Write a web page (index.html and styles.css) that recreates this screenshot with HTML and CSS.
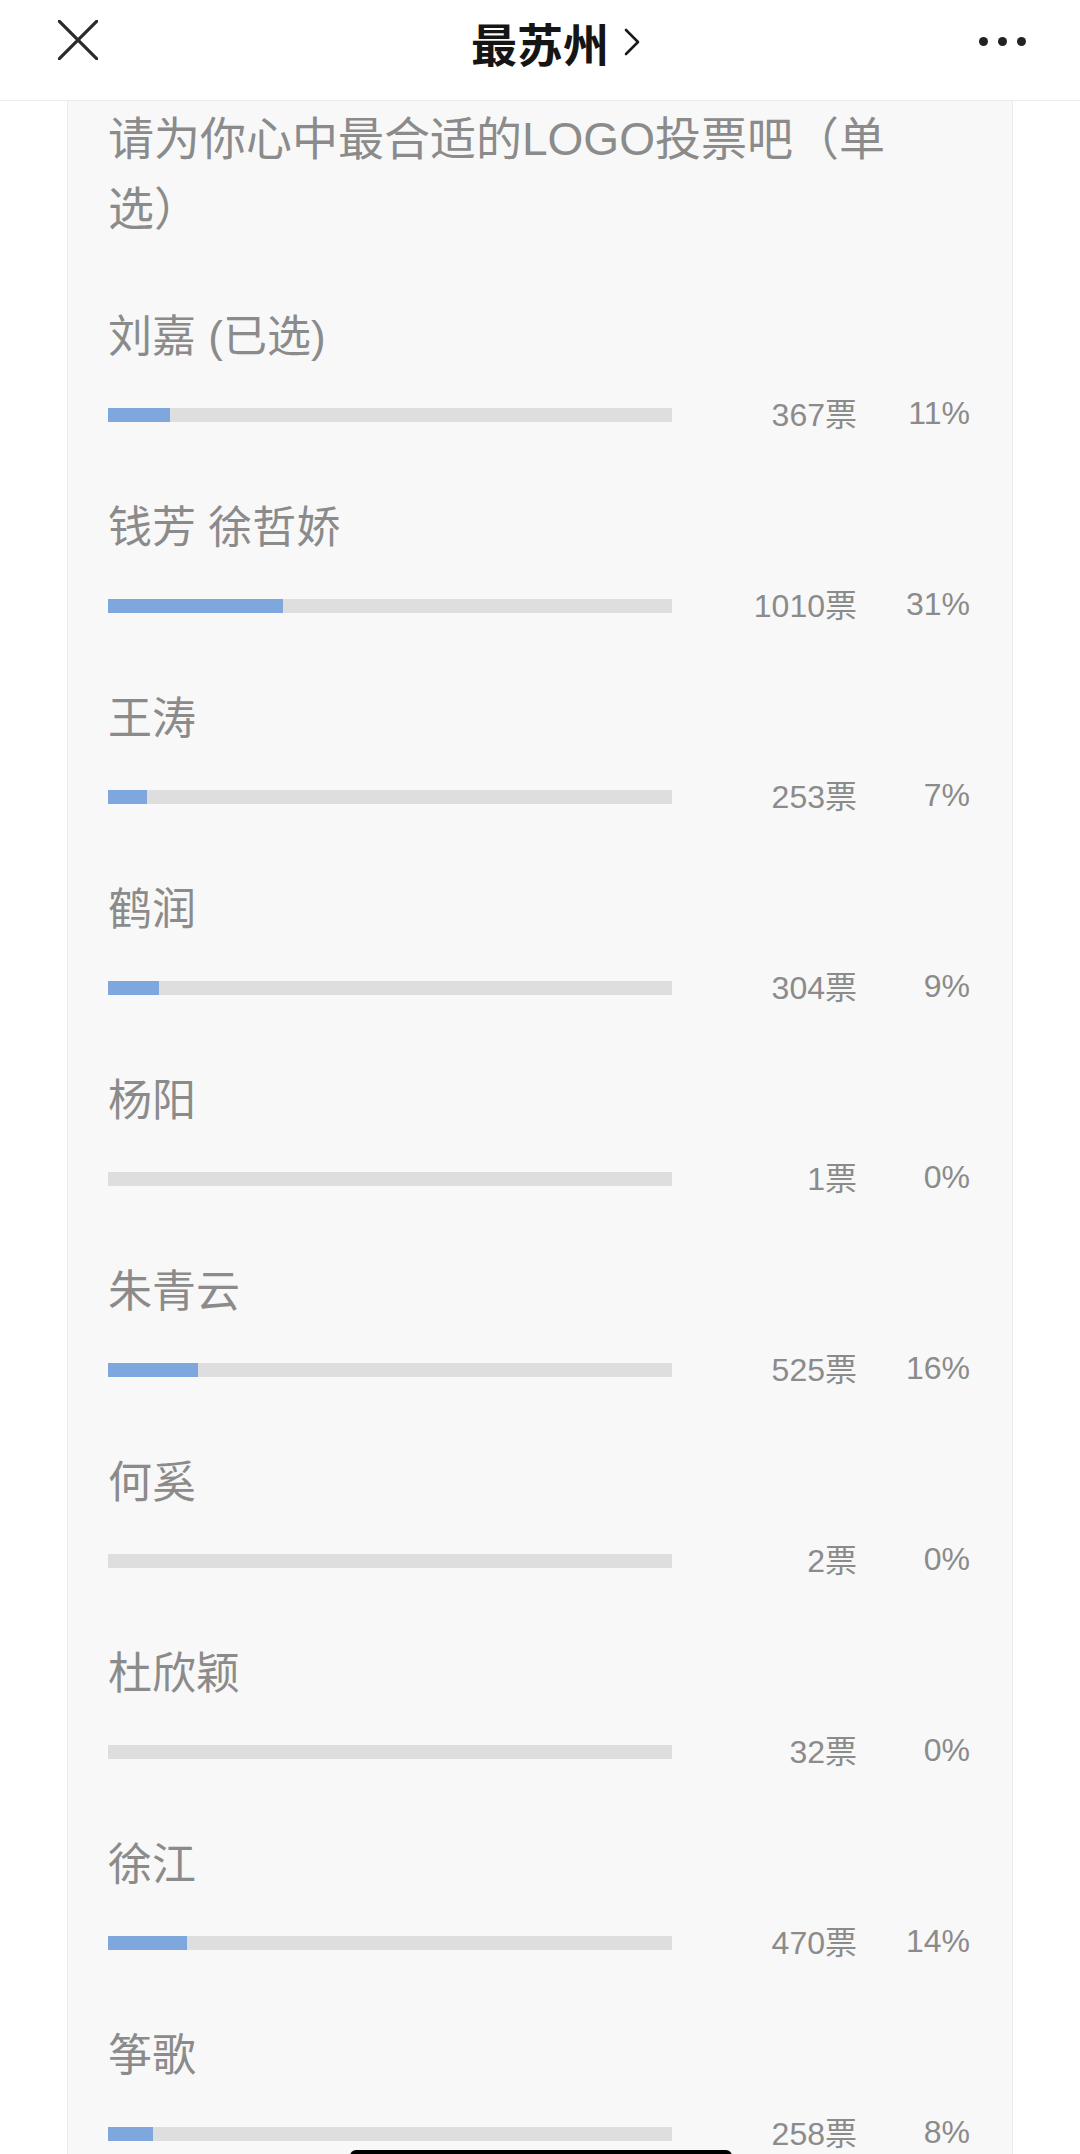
FILE: index.html
```html
<!DOCTYPE html>
<html lang="zh-CN">
<head>
    <meta charset="UTF-8">
    <meta name="viewport" content="width=device-width, initial-scale=1.0">
    <title>最苏州</title>
    <link rel="stylesheet" href="styles.css">
</head>
<body>
    <header class="topbar">
        <div class="topbar-left">
            <svg class="close-icon" width="40" height="40" viewBox="0 0 40 40">
                <path d="M1 1 L39 39 M39 1 L1 39" stroke="#2b2b2b" stroke-width="3.2" stroke-linecap="round" fill="none"/>
            </svg>
        </div>
        <div class="title">
            最苏州
            <svg class="chevron" width="16" height="28" viewBox="0 0 16 28">
                <path d="M2 2 L14 14 L2 26" stroke="#1a1a1a" stroke-width="2.6" fill="none" stroke-linecap="round" stroke-linejoin="round"/>
            </svg>
        </div>
        <div class="topbar-right">
            <span class="dot"></span>
            <span class="dot"></span>
            <span class="dot"></span>
        </div>
    </header>

    <main class="vote-card">
        <p class="question">请为你心中最合适的LOGO投票吧（单选）</p>

        <div class="option">
            <div class="name">刘嘉 (已选)</div>
            <div class="result">
                <div class="bar"><div class="fill" style="width: 11%"></div></div>
                <span class="votes">367票</span>
                <span class="percent">11%</span>
            </div>
        </div>

        <div class="option">
            <div class="name">钱芳 徐哲娇</div>
            <div class="result">
                <div class="bar"><div class="fill" style="width: 31%"></div></div>
                <span class="votes">1010票</span>
                <span class="percent">31%</span>
            </div>
        </div>

        <div class="option">
            <div class="name">王涛</div>
            <div class="result">
                <div class="bar"><div class="fill" style="width: 7%"></div></div>
                <span class="votes">253票</span>
                <span class="percent">7%</span>
            </div>
        </div>

        <div class="option">
            <div class="name">鹤润</div>
            <div class="result">
                <div class="bar"><div class="fill" style="width: 9%"></div></div>
                <span class="votes">304票</span>
                <span class="percent">9%</span>
            </div>
        </div>

        <div class="option">
            <div class="name">杨阳</div>
            <div class="result">
                <div class="bar"><div class="fill" style="width: 0%"></div></div>
                <span class="votes">1票</span>
                <span class="percent">0%</span>
            </div>
        </div>

        <div class="option">
            <div class="name">朱青云</div>
            <div class="result">
                <div class="bar"><div class="fill" style="width: 16%"></div></div>
                <span class="votes">525票</span>
                <span class="percent">16%</span>
            </div>
        </div>

        <div class="option">
            <div class="name">何奚</div>
            <div class="result">
                <div class="bar"><div class="fill" style="width: 0%"></div></div>
                <span class="votes">2票</span>
                <span class="percent">0%</span>
            </div>
        </div>

        <div class="option">
            <div class="name">杜欣颖</div>
            <div class="result">
                <div class="bar"><div class="fill" style="width: 0%"></div></div>
                <span class="votes">32票</span>
                <span class="percent">0%</span>
            </div>
        </div>

        <div class="option">
            <div class="name">徐江</div>
            <div class="result">
                <div class="bar"><div class="fill" style="width: 14%"></div></div>
                <span class="votes">470票</span>
                <span class="percent">14%</span>
            </div>
        </div>

        <div class="option">
            <div class="name">筝歌</div>
            <div class="result">
                <div class="bar"><div class="fill" style="width: 8%"></div></div>
                <span class="votes">258票</span>
                <span class="percent">8%</span>
            </div>
        </div>
    </main>

    <div class="home-indicator"></div>
</body>
</html>
```

FILE: styles.css
```css
* {
    margin: 0;
    padding: 0;
    box-sizing: border-box;
    font-family: 'Liberation Sans', 'Noto Sans CJK SC', sans-serif;
}

html, body {
    height: 100%;
    overflow: hidden;
}

body {
    background: #ffffff;
}

.topbar {
    height: 101px;
    display: grid;
    grid-template-columns: 1fr auto 1fr;
    align-items: start;
    padding-top: 20px;
    background: #ffffff;
    border-bottom: 1px solid #ececec;
}

.topbar-left {
    padding-left: 58px;
}

.close-icon {
    display: block;
}

.title {
    position: relative;
    font-size: 46px;
    line-height: 44px;
    font-weight: bold;
    color: #151515;
    font-family: 'Noto Sans CJK SC', sans-serif;
}

.chevron {
    position: absolute;
    left: calc(100% + 15px);
    top: 8px;
}

.topbar-right {
    display: flex;
    justify-content: flex-end;
    align-items: center;
    gap: 10px;
    height: 42px;
    padding-right: 54px;
}

.dot {
    width: 9px;
    height: 9px;
    border-radius: 50%;
    background: #222;
}

.vote-card {
    margin: 0 67px;
    min-height: calc(100vh - 101px);
    background: #f8f8f8;
    border-left: 1px solid #ededed;
    border-right: 1px solid #ededed;
    padding: 3px 42px 0 40px;
}

.question {
    font-size: 46px;
    line-height: 70px;
    color: #8b8b8b;
    padding-right: 30px;
    text-spacing-trim: space-all;
}

.option {
    padding-top: 63px;
}

.name {
    font-size: 44px;
    line-height: 60px;
    color: #8b8b8b;
}

.result {
    margin-top: 28px;
    height: 40px;
    display: flex;
    align-items: center;
    font-size: 32px;
    color: #8b8b8b;
}

.bar {
    flex: 0 0 564px;
    height: 14px;
    background: #dedede;
}

.fill {
    height: 100%;
    background: #7ea7dd;
}

.votes {
    flex: 0 0 185px;
    text-align: right;
    padding-bottom: 7px;
}

.percent {
    flex: 1;
    text-align: right;
    padding-bottom: 3px;
}

.home-indicator {
    position: fixed;
    left: 350px;
    bottom: -8px;
    width: 382px;
    height: 12px;
    border-radius: 6px;
    background: #000;
}
```
